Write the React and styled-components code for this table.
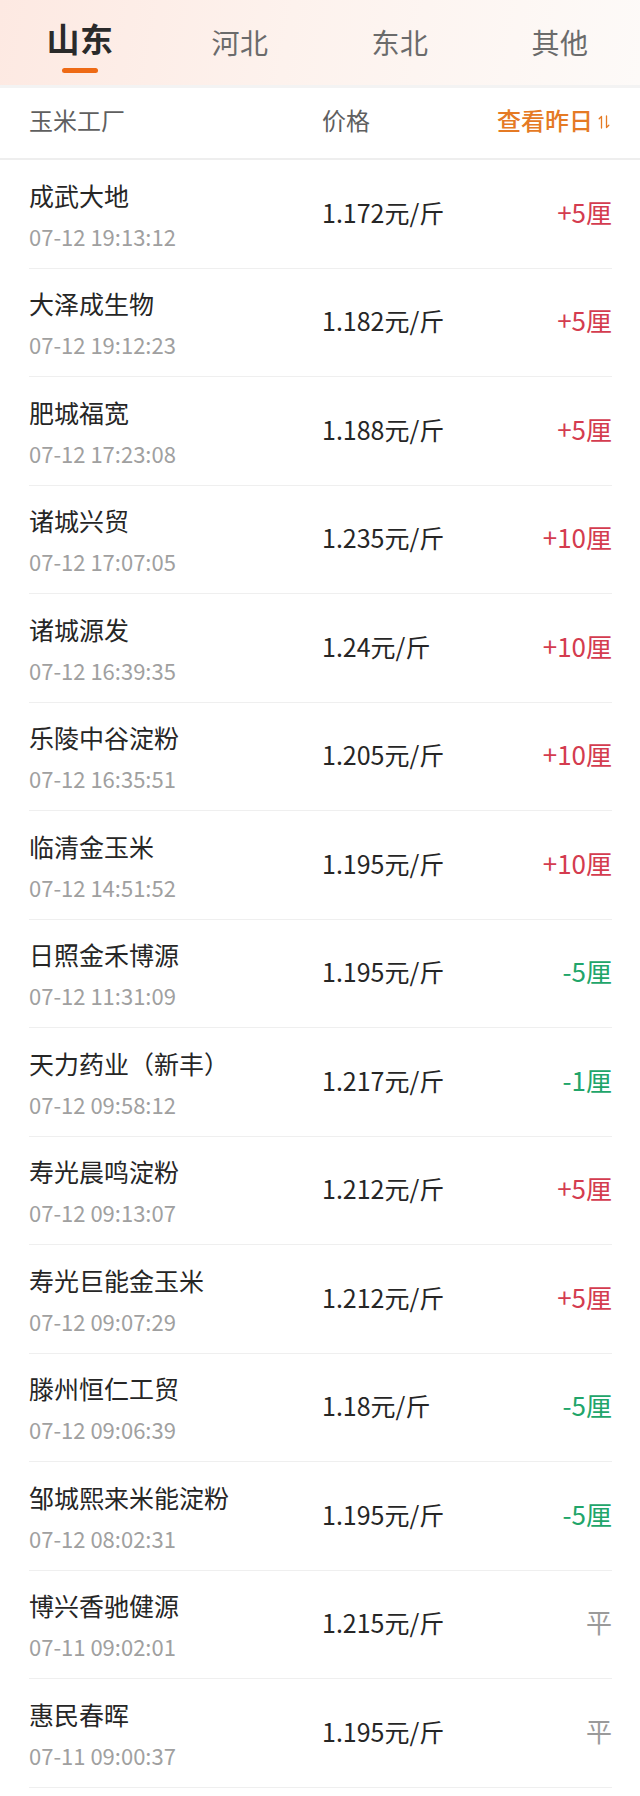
import React, { useState } from 'react'
import styled, { createGlobalStyle } from 'styled-components'

const GlobalStyle = createGlobalStyle`
  html, body {
    margin: 0;
    padding: 0;
    background: #fff;
  }
  body {
    font-family: "Noto Sans CJK SC", "Noto Sans", sans-serif;
    color: #222;
  }
`

const tabs = ['山东', '河北', '东北', '其他']

const rows = [
  { name: '成武大地', time: '07-12 19:13:12', price: '1.172', change: '+5厘' },
  { name: '大泽成生物', time: '07-12 19:12:23', price: '1.182', change: '+5厘' },
  { name: '肥城福宽', time: '07-12 17:23:08', price: '1.188', change: '+5厘' },
  { name: '诸城兴贸', time: '07-12 17:07:05', price: '1.235', change: '+10厘' },
  { name: '诸城源发', time: '07-12 16:39:35', price: '1.24', change: '+10厘' },
  { name: '乐陵中谷淀粉', time: '07-12 16:35:51', price: '1.205', change: '+10厘' },
  { name: '临清金玉米', time: '07-12 14:51:52', price: '1.195', change: '+10厘' },
  { name: '日照金禾博源', time: '07-12 11:31:09', price: '1.195', change: '-5厘' },
  { name: '天力药业（新丰）', time: '07-12 09:58:12', price: '1.217', change: '-1厘' },
  { name: '寿光晨鸣淀粉', time: '07-12 09:13:07', price: '1.212', change: '+5厘' },
  { name: '寿光巨能金玉米', time: '07-12 09:07:29', price: '1.212', change: '+5厘' },
  { name: '滕州恒仁工贸', time: '07-12 09:06:39', price: '1.18', change: '-5厘' },
  { name: '邹城熙来米能淀粉', time: '07-12 08:02:31', price: '1.195', change: '-5厘' },
  { name: '博兴香驰健源', time: '07-11 09:02:01', price: '1.215', change: '平' },
  { name: '惠民春晖', time: '07-11 09:00:37', price: '1.195', change: '平' },
]

const trendOf = (change) => {
  if (change.startsWith('+')) return 'up'
  if (change.startsWith('-')) return 'down'
  return 'flat'
}

const App = () => {
  const [active, setActive] = useState(0)

  return <Page>
    <GlobalStyle />
    <TabBar>
      {tabs.map((t, i) => (
        <Tab key={t} $active={i === active} onClick={() => setActive(i)}>
          <TabLabel $active={i === active}>{t}</TabLabel>
          <TabLine $active={i === active} />
        </Tab>
      ))}
    </TabBar>

    <HeadRow>
      <HeadCell>玉米工厂</HeadCell>
      <HeadCell>价格</HeadCell>
      <SortCell>
        查看昨日
        <svg width="12" height="16" viewBox="0 0 12 16" fill="none" stroke="currentColor" strokeWidth="1.3" strokeLinecap="round" strokeLinejoin="round">
          <path d="M3.5 14V2.5M1.2 4.8L3.5 2.5" />
          <path d="M8.5 2v11.5M10.8 11.2L8.5 13.5" />
        </svg>
      </SortCell>
    </HeadRow>

    <List>
      {rows.map((r) => (
        <Row key={r.name + r.time}>
          <Factory>
            <Name>{r.name}</Name>
            <Time>{r.time}</Time>
          </Factory>
          <Price>{r.price}元/斤</Price>
          <Change $trend={trendOf(r.change)}>{r.change}</Change>
        </Row>
      ))}
    </List>
  </Page>
}

const Page = styled.div`
  width: 640px;
  min-height: 1796px;
  background: #fff;
`

const TabBar = styled.div`
  display: flex;
  height: 85px;
  background: linear-gradient(100deg, #fde9e2 0%, #fdf2ed 45%, #fdfaf8 100%);
  border-bottom: 3px solid #f3f3f3;
`

const Tab = styled.div`
  flex: 1;
  display: flex;
  flex-direction: column;
  align-items: center;
  padding-top: ${(p) => (p.$active ? '18px' : '22px')};
  cursor: pointer;
`

const TabLabel = styled.span`
  font-size: ${(p) => (p.$active ? '33px' : '28px')};
  font-weight: ${(p) => (p.$active ? 700 : 400)};
  color: ${(p) => (p.$active ? '#2a2a2a' : '#6b6b6b')};
  line-height: 40px;
  letter-spacing: 0.5px;
`

const TabLine = styled.span`
  display: ${(p) => (p.$active ? 'block' : 'none')};
  width: 36px;
  height: 5px;
  border-radius: 3px;
  margin-top: 10px;
  background: #ee6a15;
`

const HeadRow = styled.div`
  display: grid;
  grid-template-columns: 293px 1fr auto;
  align-items: center;
  height: 72px;
  box-sizing: border-box;
  padding: 0 30px 6px 29px;
  border-bottom: 2px solid #eeeeee;
`

const HeadCell = styled.div`
  font-size: 24px;
  color: #5f5f5f;
  line-height: 32px;
`

const SortCell = styled.div`
  display: flex;
  align-items: center;
  gap: 5px;
  font-size: 24px;
  font-weight: 500;
  color: #e57a24;
  line-height: 32px;

  svg {
    margin-top: 4px;
  }
`

const List = styled.div`
  padding: 0 28px 0 29px;
`

const Row = styled.div`
  display: grid;
  grid-template-columns: 293px 1fr auto;
  align-items: center;
  height: 107.5px;
  border-bottom: 1px solid #efefef;
`

const Factory = styled.div`
  display: flex;
  flex-direction: column;
`

const Name = styled.div`
  font-size: 25px;
  line-height: 34px;
  color: #262626;
`

const Time = styled.div`
  margin-top: 10px;
  font-size: 22px;
  line-height: 28px;
  color: #a0a0a0;
`

const Price = styled.div`
  font-size: 25px;
  line-height: 36px;
  padding-bottom: 4px;
  color: #262626;
`

const changeColors = {
  up: '#d43c4f',
  down: '#21a56a',
  flat: '#9a9a9a',
}

const Change = styled.div`
  font-size: 26px;
  line-height: 36px;
  padding-bottom: 4px;
  color: ${(p) => changeColors[p.$trend]};
  text-align: right;
`

export default App
